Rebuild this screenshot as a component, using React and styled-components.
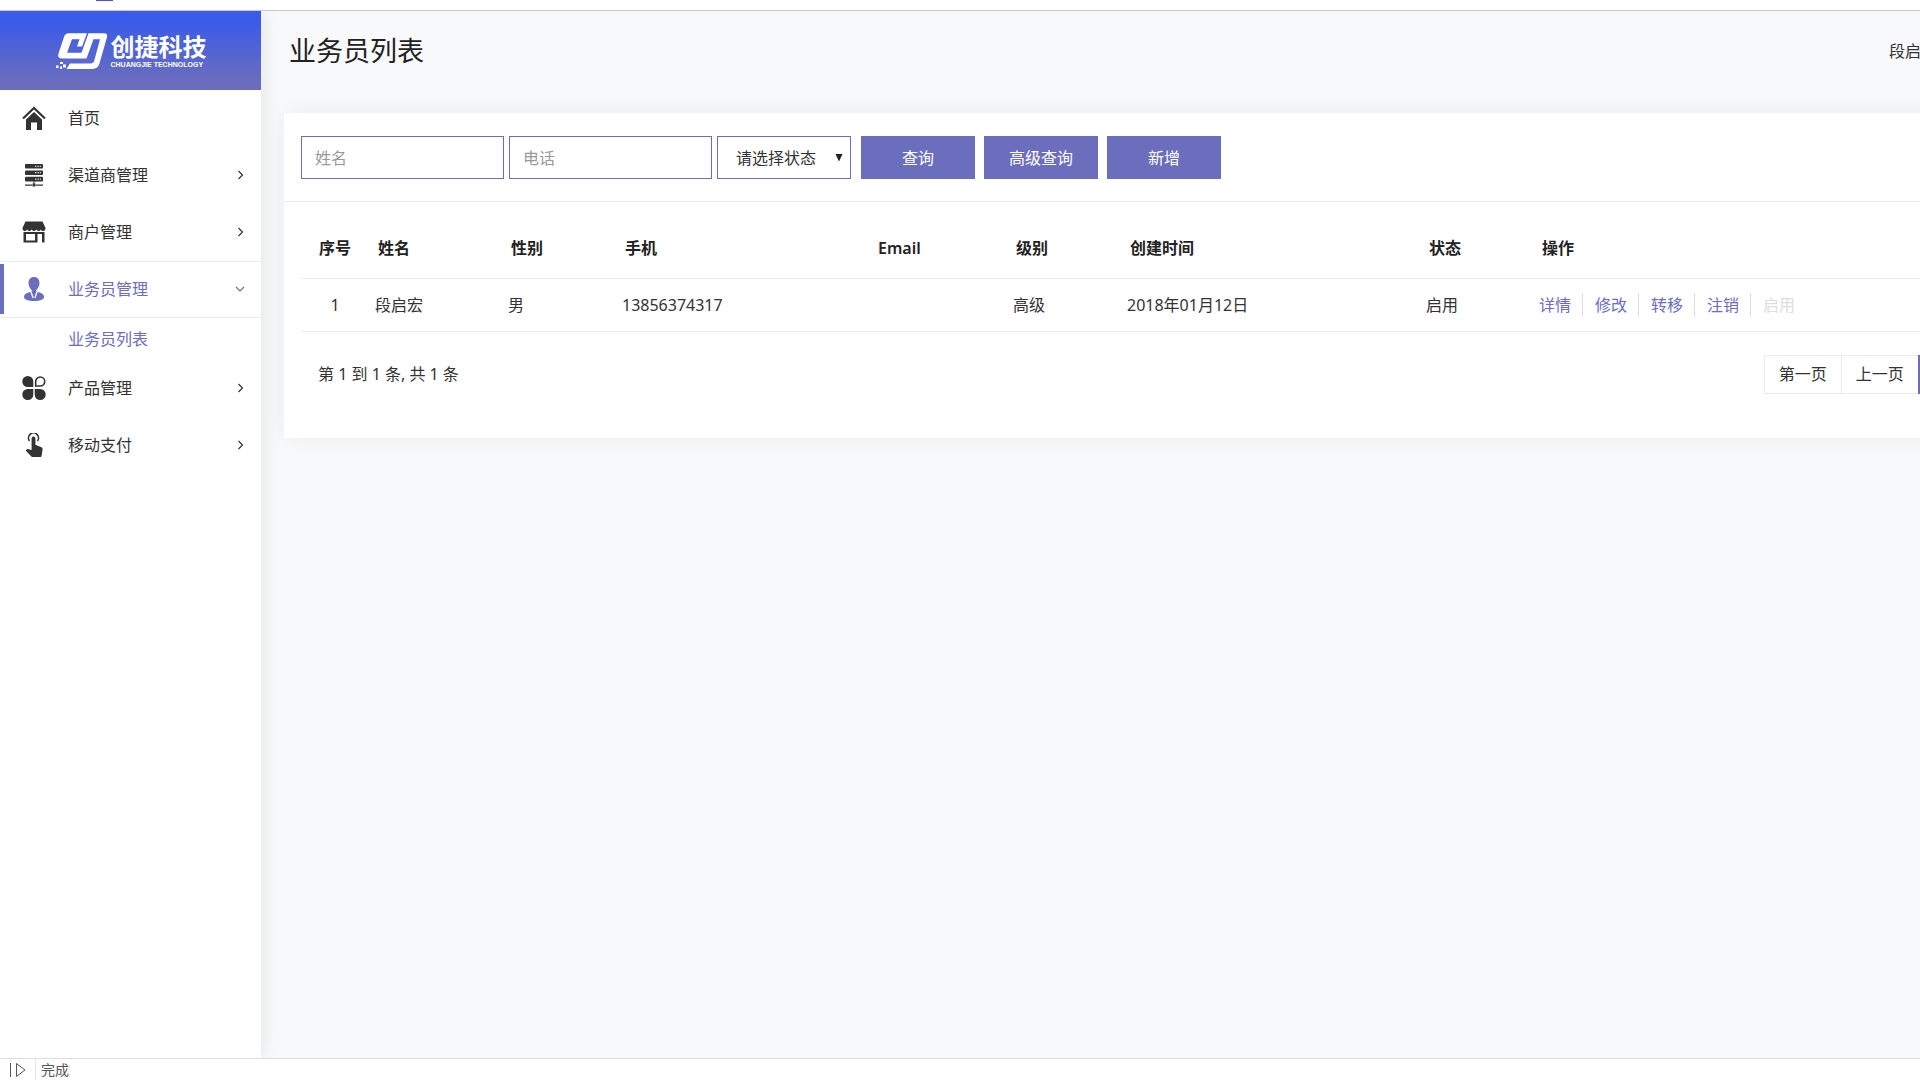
import styled, { createGlobalStyle } from "styled-components"

const accent = "#6b6dbd"

const menu = [
    { name: "首页", icon: "home" },
    { name: "渠道商管理", icon: "server", more: true },
    { name: "商户管理", icon: "shop", more: true },
    { name: "业务员管理", icon: "user", more: true, active: true, children: ["业务员列表"] },
    { name: "产品管理", icon: "clover", more: true },
    { name: "移动支付", icon: "touch", more: true },
]

const columns = [
    { title: "序号", width: 68, center: true },
    { title: "姓名", width: 133 },
    { title: "性别", width: 114 },
    { title: "手机", width: 253 },
    { title: "Email", width: 138 },
    { title: "级别", width: 114 },
    { title: "创建时间", width: 299 },
    { title: "状态", width: 113 },
    { title: "操作" },
]

const rows = [
    ["1", "段启宏", "男", "13856374317", "", "高级", "2018年01月12日", "启用"],
]

const actions = ["详情", "修改", "转移", "注销"]

const icons = {
    home: (
        <>
            <path d="M1 12.500 12 2l11 10.500" fill="none" stroke="currentColor" strokeWidth="2.200" />
            <path d="M12 6 4 13.500V24h5v-7.500h6V24h5V13.500z" />
        </>
    ),
    server: (
        <>
            <rect x="3" y="1" width="18" height="4.600" rx="1" />
            <rect x="3" y="7.400" width="18" height="4.600" rx="1" />
            <rect x="3" y="13.800" width="18" height="4.600" rx="1" />
            <path d="M3 21.500h7v1.200H3zM14 21.500h7v1.200h-7zM10.500 20.500h3v3h-3zM11.500 18h1v3h-1z" />
            <path d="M13 3.300h6M13 9.700h6M13 16.100h6" stroke="#fff" strokeDasharray="1.400 1" />
        </>
    ),
    shop: (
        <>
            <path d="M3.500 1.500h17L23.500 8q0 3-2.300 3t-2.300-1.500q-1 1.500-2.300 1.500t-2.300-1.500q-1 1.500-2.300 1.500t-2.300-1.500q-1 1.500-2.300 1.500t-2.300-1.500Q4.200 11 2.800 11 .5 11 .5 8z" />
            <path d="M1.500 12h21v10.500H20V14h-4.500v8.500h-14zM4 14v6.500h9V14z" fillRule="evenodd" />
        </>
    ),
    user: (
        <>
            <path d="M12 0c3.600 0 5.500 2.600 5.500 6 0 3.500-2 6-3.500 7.500l1 2H9l1-2C8.500 12 6.500 9.500 6.500 6c0-3.400 1.900-6 5.500-6z" />
            <path d="M9 15c-4 .6-7 2-7 5 0 2.600 4.500 4 10 4s10-1.400 10-4c0-3-3-4.400-7-5z" />
            <path d="m9 15 2.200 6M15 15l-2.200 6" stroke="#fff" strokeWidth="1.300" />
        </>
    ),
    clover: (
        <>
            <path d="M5.800 0a5.500 5.500 0 0 1 5.500 5.500V11H5.800a5.500 5.500 0 0 1 0-11zM5.800 24a5.500 5.500 0 0 0 5.500-5.500V13H5.800a5.500 5.500 0 0 0 0 11zM18.200 24a5.500 5.500 0 0 1-5.500-5.500V13h5.500a5.500 5.500 0 0 1 0 11z" />
            <path d="M18.200 1a4.500 4.500 0 0 0-4.500 4.500V10h4.500a4.500 4.500 0 0 0 0-9z" fill="none" stroke="currentColor" strokeWidth="1.600" />
        </>
    ),
    touch: (
        <>
            <path d="M7.500 8A5 5 0 1 1 15.500 8" fill="none" stroke="currentColor" strokeWidth="1.600" />
            <path d="M9.600 5.500a1.900 1.900 0 0 1 3.800 0v6.300l6 2.400q1.400.6 1.200 2L19.600 23q-.2 1-1.200 1h-7.600q-.8 0-1.400-.6L3.600 17.500l1-1q.5-.5 1.200-.4l3.800.9z" />
        </>
    ),
}

const Icon = ({ name }) => (
    <svg width="24" height="24" viewBox="0 0 24 24" fill="currentColor" aria-hidden="true">
        {icons[name]}
    </svg>
)

const Arrow = ({ down }) => (
    <svg width="12" height="12" viewBox="0 0 12 12" fill="none" stroke="currentColor" strokeWidth="1.200" aria-hidden="true">
        <path d={down ? "M1 4l4 4 4-4" : "M3.500 2 7.500 6l-4 4"} />
    </svg>
)

const LogoMark = () => (
    <svg width="54" height="38" viewBox="0 0 54 38" fill="#fff" aria-hidden="true">
        <path d="M13.500 1.300H32L27 14.500h-5L24.500 7.300H17L12 20.700h14.500L33.500 1.300H49q4 0 3 4l-7.500 26Q43 37 37.500 37H11.500l3.500-5.500h20.500q3 0 3.800-3L45 7.300h-6.500L31.500 26.500H7.500q-5.500 0-4-5L9 5q1.300-3.700 4.500-3.700z" />
        <path d="M5 30h3v2H5zM8 32.500h3v3H8zM1 33.500h2.500V36H1zM5 34.500h2V37H5z" />
    </svg>
)

const App = () => {
    return (
        <Page>
            <GlobalStyle />
            <TopStrip><TabMark /></TopStrip>
            <Body>
                <Sidebar>
                    <Logo>
                        <LogoMark />
                        <LogoText>
                            <LogoName>创捷科技</LogoName>
                            <LogoSub>CHUANGJIE TECHNOLOGY</LogoSub>
                        </LogoText>
                    </Logo>
                    <nav>
                        {menu.map((item) => (
                            <div key={item.name}>
                                <MenuItem href="#" $active={item.active}>
                                    <Icon name={item.icon} />
                                    <MenuText>{item.name}</MenuText>
                                    {item.more && <Arrow down={item.active} />}
                                </MenuItem>
                                {item.children?.map((child) => (
                                    <SubItem href="#" key={child}>{child}</SubItem>
                                ))}
                            </div>
                        ))}
                    </nav>
                </Sidebar>
                <Main>
                    <Content>
                        <Header>
                            <Title>业务员列表</Title>
                            <span>段启宏</span>
                        </Header>
                        <Card>
                            <Filters>
                                <TextInput placeholder="姓名" aria-label="姓名" />
                                <TextInput placeholder="电话" aria-label="电话" />
                                <SelectBox>
                                    <Select aria-label="状态">
                                        <option>请选择状态</option>
                                    </Select>
                                    <Caret width="8" height="8" viewBox="0 0 8 8" aria-hidden="true">
                                        <path d="M.5 0h7L4 7.500z" fill="#222" />
                                    </Caret>
                                </SelectBox>
                                <Buttons>
                                    <Button type="button">查询</Button>
                                    <Button type="button">高级查询</Button>
                                    <Button type="button">新增</Button>
                                </Buttons>
                            </Filters>
                            <CardBody>
                                <Table>
                                    <thead>
                                        <tr>
                                            {columns.map((col) => (
                                                <Th key={col.title} $width={col.width} $center={col.center}>{col.title}</Th>
                                            ))}
                                        </tr>
                                    </thead>
                                    <tbody>
                                        {rows.map((row) => (
                                            <tr key={row[0]}>
                                                {row.map((cell, i) => (
                                                    <Td key={columns[i].title} $center={columns[i].center}>{cell}</Td>
                                                ))}
                                                <Td>
                                                    <Actions>
                                                        {actions.map((action) => (
                                                            <Action href="#" key={action}>{action}</Action>
                                                        ))}
                                                        <Disabled>启用</Disabled>
                                                    </Actions>
                                                </Td>
                                            </tr>
                                        ))}
                                    </tbody>
                                </Table>
                                <TableFooter>
                                    <span>第 1 到 1 条, 共 1 条</span>
                                    <Pager>
                                        <PageButton type="button">第一页</PageButton>
                                        <PageButton type="button">上一页</PageButton>
                                        <PageButton type="button" $active>1</PageButton>
                                    </Pager>
                                </TableFooter>
                            </CardBody>
                        </Card>
                    </Content>
                </Main>
            </Body>
            <StatusBar>
                <StatusIcon>
                    <svg width="18" height="16" viewBox="0 0 18 16" fill="none" stroke="#555" aria-hidden="true">
                        <path d="M1.500 1v14M7.500 1.500v13L16 8z" />
                    </svg>
                </StatusIcon>
                完成
            </StatusBar>
        </Page>
    )
}

export default App

const GlobalStyle = createGlobalStyle`
    * {
        box-sizing: border-box;
    }

    body {
        margin: 0;
        overflow: hidden;
        color: #333;
        font: 16px/24px "Noto Sans", "Noto Sans CJK SC", sans-serif;
    }

    a {
        color: ${accent};
        text-decoration: none;
    }

    button, input, select {
        font: inherit;
        border-radius: 0;
    }
`

const Page = styled.div`
    display: flex;
    flex-direction: column;
    height: 100vh;
    background: #fff;
`

const TopStrip = styled.div`
    flex: none;
    height: 11px;
    padding-left: 96px;
    border-bottom: 1px solid #c8c8c8;
`

const TabMark = styled.div`
    width: 17px;
    height: 1px;
    background: #4a4de8;
`

const Body = styled.div`
    flex: 1;
    display: flex;
    min-height: 0;
    overflow: hidden;
`

const Sidebar = styled.aside`
    flex: none;
    width: 261px;
    background: #fff;
    box-shadow: 0 0 20px rgba(0, 0, 0, 0.1);
    z-index: 1;
`

const Logo = styled.div`
    display: flex;
    align-items: center;
    justify-content: center;
    gap: 2px;
    height: 79px;
    color: #fff;
    background: linear-gradient(#385bea 10%, #6b6dbd 90%);
`

const LogoText = styled.div`
    display: flex;
    flex-direction: column;
`

const LogoName = styled.span`
    font-size: 24px;
    font-weight: 700;
    line-height: 28px;
`

const LogoSub = styled.span`
    font: 700 7px/8px "Liberation Sans", sans-serif;
`

const MenuItem = styled.a`
    display: flex;
    align-items: center;
    height: 57px;
    padding: 0 14px 2px 22px;
    color: ${(p) => (p.$active ? accent : "#333")};
    border: solid #ebebee;
    border-width: ${(p) => (p.$active ? "1px 0" : 0)};
    background: ${(p) => (p.$active ? `linear-gradient(${accent}, ${accent}) 0 2px / 4px 50px no-repeat` : "none")};
`

const MenuText = styled.span`
    flex: 1;
    padding-left: 22px;
`

const SubItem = styled.a`
    display: block;
    padding-left: 68px;
    line-height: 42px;
`

const Main = styled.main`
    flex: 1;
    min-width: 0;
    overflow: hidden;
    background: #f8f9fb;
`

/* the content runs wider than the window and is cut on the right */
const Content = styled.div`
    width: calc(100% + 71px);
    padding-left: 23px;
`

const Header = styled.header`
    display: flex;
    align-items: center;
    justify-content: space-between;
    height: 80px;
    padding: 0 54px 0 5px;
`

const Title = styled.h1`
    margin: 0;
    color: #222;
    font-size: 27px;
    font-weight: 400;
`

const Card = styled.section`
    margin-top: 22px;
    background: #fff;
    box-shadow: 0 0 20px rgba(0, 0, 0, 0.06);
`

const Filters = styled.form`
    display: flex;
    gap: 5px;
    padding: 23px 17px 22px;
    border-bottom: 1px solid #ebebee;
`

const TextInput = styled.input`
    width: 203px;
    height: 43px;
    padding: 0 13px;
    border: 1px solid ${accent};

    &::placeholder {
        color: #999;
    }
`

const SelectBox = styled.div`
    position: relative;
`

const Select = styled.select`
    appearance: none;
    width: 134px;
    height: 43px;
    padding: 0 18px;
    color: #333;
    background: #fff;
    border: 1px solid ${accent};
`

const Caret = styled.svg`
    position: absolute;
    top: 18px;
    right: 8px;
    pointer-events: none;
`

const Buttons = styled.div`
    display: flex;
    gap: 9px;
    padding-left: 5px;
`

const Button = styled.button`
    width: 114px;
    height: 43px;
    color: #fff;
    background: ${accent};
    border: 0;
`

const CardBody = styled.div`
    padding: 17px 17px 44px;
`

const Table = styled.table`
    width: 100%;
    table-layout: fixed;
    border-collapse: collapse;
`

const Th = styled.th`
    width: ${(p) => (p.$width ? `${p.$width}px` : "auto")};
    height: 59px;
    padding: 0 ${(p) => (p.$center ? 0 : 9)}px;
    color: #222;
    font-weight: 600;
    text-align: ${(p) => (p.$center ? "center" : "left")};
    border-bottom: 1px solid #ebebee;
`

const Td = styled.td`
    height: 53px;
    padding: 0 ${(p) => (p.$center ? 0 : 6)}px;
    text-align: ${(p) => (p.$center ? "center" : "left")};
    border-bottom: 1px solid #ebebee;
`

const Actions = styled.div`
    display: flex;
`

const Action = styled.a`
    margin-right: 12px;
    padding-right: 11px;
    border-right: 1px solid #ddd;
`

const Disabled = styled.span`
    color: #ddd;
`

const TableFooter = styled.div`
    display: flex;
    align-items: center;
    justify-content: space-between;
    padding: 23px 17px 0;
`

const Pager = styled.div`
    display: flex;
`

const PageButton = styled.button`
    height: 39px;
    margin-left: -1px;
    padding: 0 14px;
    color: ${(p) => (p.$active ? "#fff" : "#333")};
    background: ${(p) => (p.$active ? accent : "#fff")};
    border: 1px solid ${(p) => (p.$active ? accent : "#ebebee")};
`

const StatusBar = styled.footer`
    flex: none;
    display: flex;
    align-items: center;
    height: 22px;
    color: #555;
    font-size: 14px;
    border-top: 1px solid #ddd;
`

const StatusIcon = styled.span`
    display: flex;
    align-items: center;
    height: 21px;
    margin-right: 5px;
    padding: 0 8px 0 9px;
    border-right: 1px solid #e5e5e5;
`
